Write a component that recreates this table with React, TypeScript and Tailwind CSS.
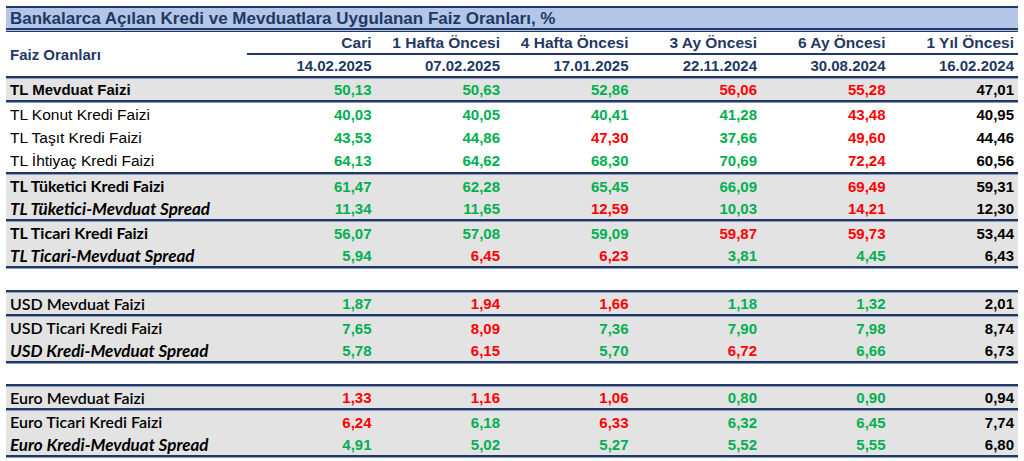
const G = "text-[#00b050]";
const R = "text-[#ff0000]";
const K = "text-black";

type Cell = [string, string];
type Row = { label: string; kind: "arialBold" | "arial" | "calBold" | "calItalic" | "cal"; cells: Cell[] };

const g = (v: string): Cell => [v, G];
const r = (v: string): Cell => [v, R];
const k = (v: string): Cell => [v, K];

const columns = [
  ["Cari", "14.02.2025"],
  ["1 Hafta Öncesi", "07.02.2025"],
  ["4 Hafta Öncesi", "17.01.2025"],
  ["3 Ay Öncesi", "22.11.2024"],
  ["6 Ay Öncesi", "30.08.2024"],
  ["1 Yıl Öncesi", "16.02.2024"],
];

const labelClass: Record<Row["kind"], string> = {
  arialBold: "font-['Liberation_Sans',Arial,sans-serif] font-bold text-[15px]",
  arial: "font-['Liberation_Sans',Arial,sans-serif] text-[15.5px]",
  calBold: "font-['Lato','Open_Sans',sans-serif] font-bold text-[16px]",
  calItalic: "font-['Lato','Open_Sans',sans-serif] font-bold italic text-[17px]",
  cal: "font-['Lato','Open_Sans',sans-serif] font-semibold text-[16px]",
};

function Line() {
  return (
    <div className="flex flex-col">
      <div className="h-[2px] bg-[#1f3864]" />
      <div className="h-px bg-[#8e9dbd]" />
    </div>
  );
}

function DataRow({ row, gray, h = "h-[22px]" }: { row: Row; gray?: boolean; h?: string }) {
  return (
    <div className={`grid grid-cols-[241px_repeat(6,1fr)] items-center ${h} ${gray ? "bg-[#e3e3e3]" : "bg-white"}`}>
      <div className={`pl-1 whitespace-nowrap text-black leading-none ${labelClass[row.kind]}`}>{row.label}</div>
      {row.cells.map(([v, c], i) => (
        <div
          key={i}
          className={`pr-1 text-right font-['Liberation_Sans',Arial,sans-serif] font-bold text-[15px] leading-none ${c}`}
        >
          {v}
        </div>
      ))}
    </div>
  );
}

const tlMevduat: Row = { label: "TL Mevduat Faizi", kind: "arialBold", cells: [g("50,13"), g("50,63"), g("52,86"), r("56,06"), r("55,28"), k("47,01")] };
const tlKredi: Row[] = [
  { label: "TL Konut Kredi Faizi", kind: "arial", cells: [g("40,03"), g("40,05"), g("40,41"), g("41,28"), r("43,48"), k("40,95")] },
  { label: "TL Taşıt Kredi Faizi", kind: "arial", cells: [g("43,53"), g("44,86"), r("47,30"), g("37,66"), r("49,60"), k("44,46")] },
  { label: "TL İhtiyaç Kredi Faizi", kind: "arial", cells: [g("64,13"), g("64,62"), g("68,30"), g("70,69"), r("72,24"), k("60,56")] },
];
const tlTuketici: Row[] = [
  { label: "TL Tüketici Kredi Faizi", kind: "calBold", cells: [g("61,47"), g("62,28"), g("65,45"), g("66,09"), r("69,49"), k("59,31")] },
  { label: "TL Tüketici-Mevduat Spread", kind: "calItalic", cells: [g("11,34"), g("11,65"), r("12,59"), g("10,03"), r("14,21"), k("12,30")] },
];
const tlTicari: Row[] = [
  { label: "TL Ticari Kredi Faizi", kind: "calBold", cells: [g("56,07"), g("57,08"), g("59,09"), r("59,87"), r("59,73"), k("53,44")] },
  { label: "TL Ticari-Mevduat Spread", kind: "calItalic", cells: [g("5,94"), r("6,45"), r("6,23"), g("3,81"), g("4,45"), k("6,43")] },
];
const usdMevduat: Row = { label: "USD Mevduat Faizi", kind: "cal", cells: [g("1,87"), r("1,94"), r("1,66"), g("1,18"), g("1,32"), k("2,01")] };
const usdKredi: Row[] = [
  { label: "USD Ticari Kredi Faizi", kind: "cal", cells: [g("7,65"), r("8,09"), g("7,36"), g("7,90"), g("7,98"), k("8,74")] },
  { label: "USD Kredi-Mevduat Spread", kind: "calItalic", cells: [g("5,78"), r("6,15"), g("5,70"), r("6,72"), g("6,66"), k("6,73")] },
];
const euroMevduat: Row = { label: "Euro Mevduat Faizi", kind: "cal", cells: [r("1,33"), r("1,16"), r("1,06"), g("0,80"), g("0,90"), k("0,94")] };
const euroKredi: Row[] = [
  { label: "Euro Ticari Kredi Faizi", kind: "cal", cells: [r("6,24"), g("6,18"), r("6,33"), g("6,32"), g("6,45"), k("7,74")] },
  { label: "Euro Kredi-Mevduat Spread", kind: "calItalic", cells: [g("4,91"), g("5,02"), g("5,27"), g("5,52"), g("5,55"), k("6,80")] },
];

export default function App() {
  return (
    <div className="w-[1024px] h-[461px] bg-white overflow-hidden pt-[6px] px-[6px]">
      <div className="w-[1012px] flex flex-col">
        {/* title */}
        <div className="h-[2px] bg-[#1f3864]" />
        <div className="h-[20px] bg-[#b4c6e7] flex items-center pl-1 font-['Liberation_Sans',Arial,sans-serif] font-bold text-[17px] text-[#1f3864] leading-none">
          Bankalarca Açılan Kredi ve Mevduatlara Uygulanan Faiz Oranları, %
        </div>
        <div className="flex flex-col">
          <div className="h-[2px] bg-[#1f3864]" />
          <div className="h-px bg-[#b4c6e7]" />
          <div className="h-px bg-[#1f3864]" />
        </div>

        {/* header */}
        <div className="grid grid-cols-[241px_1fr] font-['Liberation_Sans',Arial,sans-serif] font-bold text-[#1f3864] leading-none">
          <div className="flex items-center pl-1 pt-[1px] text-[15px]">Faiz Oranları</div>
          <div className="flex flex-col">
            <div className="grid grid-cols-6 h-[21px] items-end pb-[3px] text-[15.5px]">
              {columns.map(([t]) => (
                <div key={t} className="text-right pr-1">{t}</div>
              ))}
            </div>
            <div className="h-[2px] bg-[#1f3864]" />
            <div className="grid grid-cols-6 h-[21px] items-center text-[15px]">
              {columns.map(([t, d]) => (
                <div key={t} className="text-right pr-1">{d}</div>
              ))}
            </div>
          </div>
        </div>

        <Line />
        <DataRow row={tlMevduat} gray h="h-[21px]" />
        <Line />
        {tlKredi.map((row) => (
          <DataRow key={row.label} row={row} h="h-[23px]" />
        ))}
        <Line />
        {tlTuketici.map((row) => (
          <DataRow key={row.label} row={row} gray />
        ))}
        <Line />
        {tlTicari.map((row) => (
          <DataRow key={row.label} row={row} gray />
        ))}
        <Line />

        <div className="h-[21px]" />
        <Line />
        <DataRow row={usdMevduat} gray h="h-[21px]" />
        <Line />
        {usdKredi.map((row) => (
          <DataRow key={row.label} row={row} gray />
        ))}
        <Line />

        <div className="h-[20px]" />
        <Line />
        <DataRow row={euroMevduat} gray h="h-[21px]" />
        <Line />
        {euroKredi.map((row) => (
          <DataRow key={row.label} row={row} gray />
        ))}
        <Line />
      </div>
    </div>
  );
}
